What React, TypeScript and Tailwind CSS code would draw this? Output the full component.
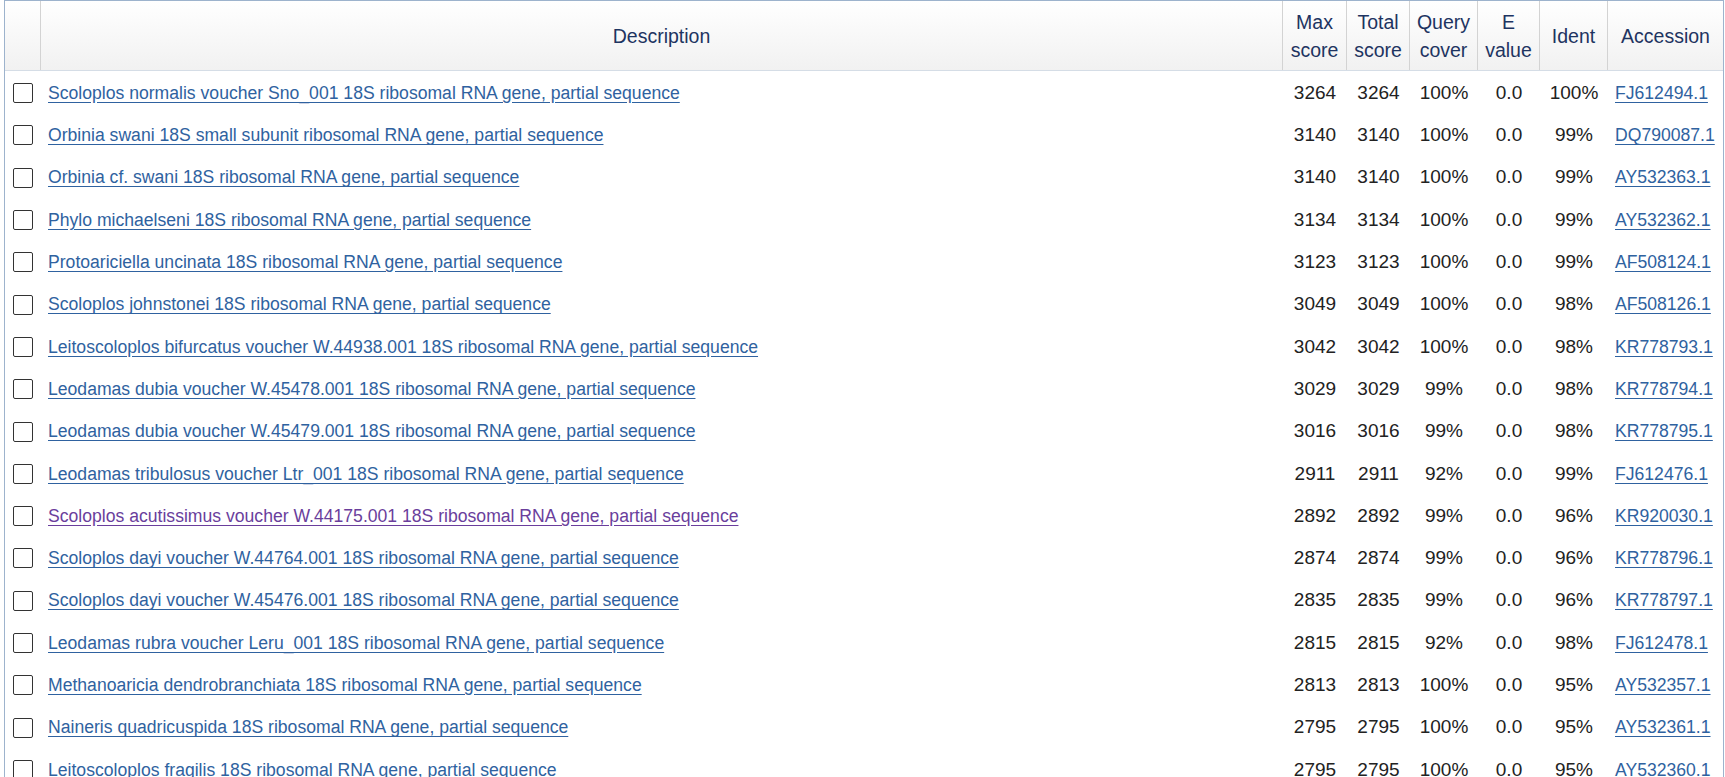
type Hit = {
  desc: string;
  max: string;
  total: string;
  cover: string;
  ident: string;
  acc: string;
  visited?: boolean;
};

const hits: Hit[] = [
  { desc: "Scoloplos normalis voucher Sno_001 18S ribosomal RNA gene, partial sequence", max: "3264", total: "3264", cover: "100%", ident: "100%", acc: "FJ612494.1" },
  { desc: "Orbinia swani 18S small subunit ribosomal RNA gene, partial sequence", max: "3140", total: "3140", cover: "100%", ident: "99%", acc: "DQ790087.1" },
  { desc: "Orbinia cf. swani 18S ribosomal RNA gene, partial sequence", max: "3140", total: "3140", cover: "100%", ident: "99%", acc: "AY532363.1" },
  { desc: "Phylo michaelseni 18S ribosomal RNA gene, partial sequence", max: "3134", total: "3134", cover: "100%", ident: "99%", acc: "AY532362.1" },
  { desc: "Protoariciella uncinata 18S ribosomal RNA gene, partial sequence", max: "3123", total: "3123", cover: "100%", ident: "99%", acc: "AF508124.1" },
  { desc: "Scoloplos johnstonei 18S ribosomal RNA gene, partial sequence", max: "3049", total: "3049", cover: "100%", ident: "98%", acc: "AF508126.1" },
  { desc: "Leitoscoloplos bifurcatus voucher W.44938.001 18S ribosomal RNA gene, partial sequence", max: "3042", total: "3042", cover: "100%", ident: "98%", acc: "KR778793.1" },
  { desc: "Leodamas dubia voucher W.45478.001 18S ribosomal RNA gene, partial sequence", max: "3029", total: "3029", cover: "99%", ident: "98%", acc: "KR778794.1" },
  { desc: "Leodamas dubia voucher W.45479.001 18S ribosomal RNA gene, partial sequence", max: "3016", total: "3016", cover: "99%", ident: "98%", acc: "KR778795.1" },
  { desc: "Leodamas tribulosus voucher Ltr_001 18S ribosomal RNA gene, partial sequence", max: "2911", total: "2911", cover: "92%", ident: "99%", acc: "FJ612476.1" },
  { desc: "Scoloplos acutissimus voucher W.44175.001 18S ribosomal RNA gene, partial sequence", max: "2892", total: "2892", cover: "99%", ident: "96%", acc: "KR920030.1", visited: true },
  { desc: "Scoloplos dayi voucher W.44764.001 18S ribosomal RNA gene, partial sequence", max: "2874", total: "2874", cover: "99%", ident: "96%", acc: "KR778796.1" },
  { desc: "Scoloplos dayi voucher W.45476.001 18S ribosomal RNA gene, partial sequence", max: "2835", total: "2835", cover: "99%", ident: "96%", acc: "KR778797.1" },
  { desc: "Leodamas rubra voucher Leru_001 18S ribosomal RNA gene, partial sequence", max: "2815", total: "2815", cover: "92%", ident: "98%", acc: "FJ612478.1" },
  { desc: "Methanoaricia dendrobranchiata 18S ribosomal RNA gene, partial sequence", max: "2813", total: "2813", cover: "100%", ident: "95%", acc: "AY532357.1" },
  { desc: "Naineris quadricuspida 18S ribosomal RNA gene, partial sequence", max: "2795", total: "2795", cover: "100%", ident: "95%", acc: "AY532361.1" },
  { desc: "Leitoscoloplos fragilis 18S ribosomal RNA gene, partial sequence", max: "2795", total: "2795", cover: "100%", ident: "95%", acc: "AY532360.1" },
];

const cols = "grid grid-cols-[36px_1242px_64px_63px_68px_62px_68px_115px]";

export default function App() {
  return (
    <div className="h-[777px] overflow-hidden bg-white font-['Liberation_Sans',Arial,sans-serif]">
      <div className="ml-[4px] w-[1720px] border-l border-r border-t border-[#9db3cd]">
        {/* header */}
        <div className={`${cols} h-[70px] border-b border-[#d5dde6] bg-gradient-to-b from-white to-[#f1f1f1] text-[19.5px] leading-[28px] text-[#1e3461] text-center`}>
          <div className="border-r border-[#d3d3d3]" />
          <div className="flex items-center justify-center border-r border-[#d3d3d3]">Description</div>
          <div className="flex items-center justify-center border-r border-[#d3d3d3]">Max<br />score</div>
          <div className="flex items-center justify-center border-r border-[#d3d3d3]">Total<br />score</div>
          <div className="flex items-center justify-center border-r border-[#d3d3d3]">Query<br />cover</div>
          <div className="flex items-center justify-center border-r border-[#d3d3d3]">E<br />value</div>
          <div className="flex items-center justify-center border-r border-[#d3d3d3]">Ident</div>
          <div className="flex items-center justify-center">Accession</div>
        </div>

        {/* rows */}
        {hits.map((h) => (
          <div key={h.acc} className={`${cols} h-[42.3px] pt-[2px] items-center text-[19px] text-[#222]`}>
            <div className="flex justify-center">
              <span className="w-[20px] h-[20px] border border-[#333] rounded-[2px] bg-white" />
            </div>
            <div className="pl-[7px]">
              <a
                href="#"
                className={`text-[17.6px] underline underline-offset-[3px] ${h.visited ? "text-[#6a3e9c]" : "text-[#2f62a0]"}`}
              >
                {h.desc}
              </a>
            </div>
            <div className="text-center">{h.max}</div>
            <div className="text-center">{h.total}</div>
            <div className="text-center">{h.cover}</div>
            <div className="text-center">0.0</div>
            <div className="text-center">{h.ident}</div>
            <div className="pl-[7px]">
              <a href="#" className="text-[17.6px] underline underline-offset-[3px] text-[#2f62a0]">
                {h.acc}
              </a>
            </div>
          </div>
        ))}
      </div>
    </div>
  );
}
